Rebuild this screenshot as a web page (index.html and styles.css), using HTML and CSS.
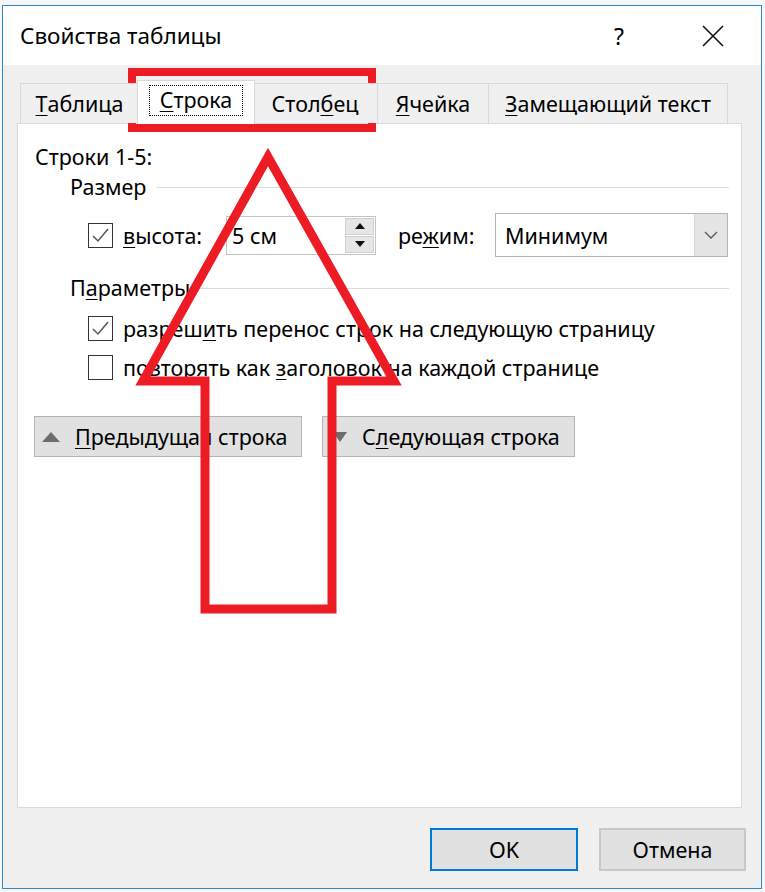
FILE: index.html
```html
<!DOCTYPE html>
<html lang="ru">
<head>
    <meta charset="UTF-8">
    <meta name="viewport" content="width=device-width, initial-scale=1.0">
    <title>Свойства таблицы</title>
    <link rel="stylesheet" href="styles.css">
</head>
<body>
    <div class="window">
        <div class="titlebar">
            <span class="title">Свойства таблицы</span>
            <span class="help">?</span>
            <span class="close">
                <svg width="22" height="22" viewBox="0 0 22 22"><path d="M1 1 L21 21 M21 1 L1 21" stroke="#111" stroke-width="1.6" fill="none"/></svg>
            </span>
        </div>

        <div class="content">
            <div class="tabs">
                <div class="tab tab-table"><u>Т</u>аблица</div>
                <div class="tab tab-row active"><span class="focus"><u>С</u>трока</span></div>
                <div class="tab tab-col">Стол<u>б</u>ец</div>
                <div class="tab tab-cell"><u>Я</u>чейка</div>
                <div class="tab tab-alt"><u>З</u>амещающий текст</div>
            </div>

            <div class="panel">
                <div class="rows-title">Строки 1-5:</div>

                <div class="group">
                    <span>Размер</span>
                    <span class="rule"></span>
                </div>

                <div class="size-row">
                    <span class="check checked">
                        <svg width="23" height="23" viewBox="0 0 23 23"><path d="M4 12 L9 17 L19 5" stroke="#555" stroke-width="1.5" fill="none"/></svg>
                    </span>
                    <span class="size-label"><u>в</u>ысота:</span>
                    <div class="spin">
                        <span class="spin-value">5 см</span>
                        <div class="spin-btns">
                            <span class="spin-btn"><svg width="10" height="6" viewBox="0 0 10 6"><path d="M0 6 L5 0 L10 6 Z" fill="#111"/></svg></span>
                            <span class="spin-btn"><svg width="10" height="6" viewBox="0 0 10 6"><path d="M0 0 L5 6 L10 0 Z" fill="#111"/></svg></span>
                        </div>
                    </div>
                    <span class="mode-label">ре<u>ж</u>им:</span>
                    <div class="select">
                        <span class="select-value">Минимум</span>
                        <span class="select-btn">
                            <svg width="14" height="8" viewBox="0 0 14 8"><path d="M1 1 L7 7 L13 1" stroke="#555" stroke-width="1.3" fill="none"/></svg>
                        </span>
                    </div>
                </div>

                <div class="group group-params">
                    <span>П<u>а</u>раметры</span>
                    <span class="rule"></span>
                </div>

                <div class="option">
                    <span class="check checked">
                        <svg width="23" height="23" viewBox="0 0 23 23"><path d="M4 12 L9 17 L19 5" stroke="#555" stroke-width="1.5" fill="none"/></svg>
                    </span>
                    <span>разреш<u>и</u>ть перенос строк на следующую страницу</span>
                </div>
                <div class="option option-second">
                    <span class="check"></span>
                    <span>повторять как <u>з</u>аголовок на каждой странице</span>
                </div>

                <div class="nav">
                    <button class="nav-btn nav-prev">
                        <svg width="18" height="10" viewBox="0 0 18 10"><path d="M0 10 L9 0 L18 10 Z" fill="#6d6d6d"/></svg>
                        <span><u>П</u>редыдущая строка</span>
                    </button>
                    <button class="nav-btn nav-next">
                        <svg width="14" height="10" viewBox="0 0 14 10"><path d="M0 0 L14 0 L7 10 Z" fill="#6d6d6d"/></svg>
                        <span>С<u>л</u>едующая строка</span>
                    </button>
                </div>
            </div>

            <div class="footer">
                <button class="btn btn-ok">OK</button>
                <button class="btn btn-cancel">Отмена</button>
            </div>
        </div>
    </div>

    <!-- red markup drawn on top of the screenshot -->
    <svg class="markup" width="765" height="892" viewBox="0 0 765 892">
        <rect x="132" y="72" width="240" height="56" fill="none" stroke="#ed1c24" stroke-width="8"/>
        <polygon points="268,157 394,381 332,381 332,609 205,609 205,381 143,381" fill="none" stroke="#ed1c24" stroke-width="9" stroke-linejoin="miter"/>
    </svg>
</body>
</html>
```

FILE: styles.css
```css
* {
    margin: 0;
    padding: 0;
    box-sizing: border-box;
}

body {
    font-family: 'Noto Sans', 'Open Sans', sans-serif;
    font-size: 21.5px;
    color: #000;
    background: #f7f7f7;
    width: 765px;
    height: 892px;
    overflow: hidden;
    position: relative;
}

u {
    text-decoration-thickness: 1px;
    text-underline-offset: 3px;
}

.window {
    width: 760px;
    height: 884px;
    margin: 5px 0 0 2px;
    border: 1px solid #2b88d8;
    background: #f0f0f0;
}

.titlebar {
    height: 59px;
    background: #fff;
    display: flex;
    align-items: center;
    padding-left: 17px;
}

.title {
    font-size: 22.5px;
    flex: 1;
}

.help {
    font-size: 23px;
    width: 20px;
    margin-right: 68px;
}

.close {
    width: 22px;
    margin-right: 37px;
    display: flex;
}

.content {
    padding: 15px 19px 0 14px;
}

.tabs {
    display: flex;
    align-items: flex-end;
    height: 43px;
    padding-left: 3px;
    position: relative;
    z-index: 1;
}

.tab {
    height: 40px;
    border: 1px solid #d9d9d9;
    border-bottom: none;
    border-left: none;
    background: #f0f0f0;
    display: flex;
    align-items: center;
    justify-content: center;
    line-height: 24px;
}

.tab-table {
    width: 119px;
    border-left: 1px solid #d9d9d9;
}

.tab-row {
    width: 118px;
}

.tab-col {
    width: 125px;
}

.tab-cell {
    width: 111px;
}

.tab-alt {
    width: 239px;
}

.tab.active {
    height: 44px;
    margin: 0 -2px -1px -2px;
    border-left: 1px solid #d9d9d9;
    background: #fff;
    position: relative;
    z-index: 2;
}

.focus {
    border: 1px dotted #000;
    padding: 2px 10px 3px 10px;
    margin-top: -4px;
}

.panel {
    height: 685px;
    background: #fff;
    border: 1px solid #d9d9d9;
    padding: 21px 12px 0 17px;
}

.rows-title {
    line-height: 24px;
}

.group {
    display: flex;
    align-items: center;
    line-height: 24px;
    margin: 6px 0 0 35px;
}

.rule {
    flex: 1;
    height: 1px;
    background: #dcdcdc;
    margin-left: 10px;
}

.group-params {
    margin-top: 19px;
}

.group-params .rule {
    margin-left: 4px;
}

.size-row {
    display: flex;
    align-items: center;
    height: 44px;
    margin: 14px 0 0 53px;
}

.check {
    width: 25px;
    height: 25px;
    border: 1px solid #333;
    background: #fff;
    flex-shrink: 0;
    display: flex;
    align-items: center;
    justify-content: center;
}

.size-label {
    width: 113px;
    padding-left: 10px;
}

.spin {
    width: 150px;
    height: 39px;
    border: 1px solid #c4c4c4;
    display: flex;
    align-items: center;
}

.spin-value {
    flex: 1;
    padding-left: 5px;
}

.spin-btns {
    width: 30px;
    height: 37px;
    display: flex;
    flex-direction: column;
    padding: 1px 1px 1px 0;
    gap: 1px;
}

.spin-btn {
    flex: 1;
    background: #e6e6e6;
    border: 1px solid #d0d0d0;
    display: flex;
    align-items: center;
    justify-content: center;
}

.mode-label {
    width: 119px;
    padding-left: 22px;
}

.select {
    width: 233px;
    height: 44px;
    border: 1px solid #b4b4b4;
    display: flex;
    align-items: stretch;
}

.select-value {
    flex: 1;
    padding-left: 9px;
    display: flex;
    align-items: center;
}

.select-btn {
    width: 33px;
    background: #e5e5e5;
    border-left: 1px solid #d4d4d4;
    display: flex;
    align-items: center;
    justify-content: center;
}

.option {
    display: flex;
    align-items: center;
    gap: 10px;
    line-height: 24px;
    margin: 16px 0 0 53px;
}

.option-second {
    margin-top: 14px;
}

.nav {
    display: flex;
    gap: 20px;
    margin: 36px 0 0 -1px;
}

.nav-btn {
    height: 41px;
    background: #e1e1e1;
    border: 1px solid #b4b4b4;
    font: inherit;
    color: #000;
    display: flex;
    align-items: center;
}

.nav-prev {
    width: 268px;
    padding-left: 7px;
    gap: 15px;
}

.nav-next {
    width: 253px;
    padding-left: 10px;
    gap: 15px;
}

.footer {
    display: flex;
    justify-content: flex-end;
    gap: 21px;
    margin: 20px -4px 0 0;
}

.btn {
    width: 148px;
    height: 43px;
    background: #e1e1e1;
    border: 2px solid #c8c8c8;
    font: inherit;
    color: #000;
}

.btn-ok {
    border-color: #0078d7;
}

.btn-cancel {
    width: 147px;
}

.markup {
    position: absolute;
    left: 0;
    top: 0;
    pointer-events: none;
}
```
